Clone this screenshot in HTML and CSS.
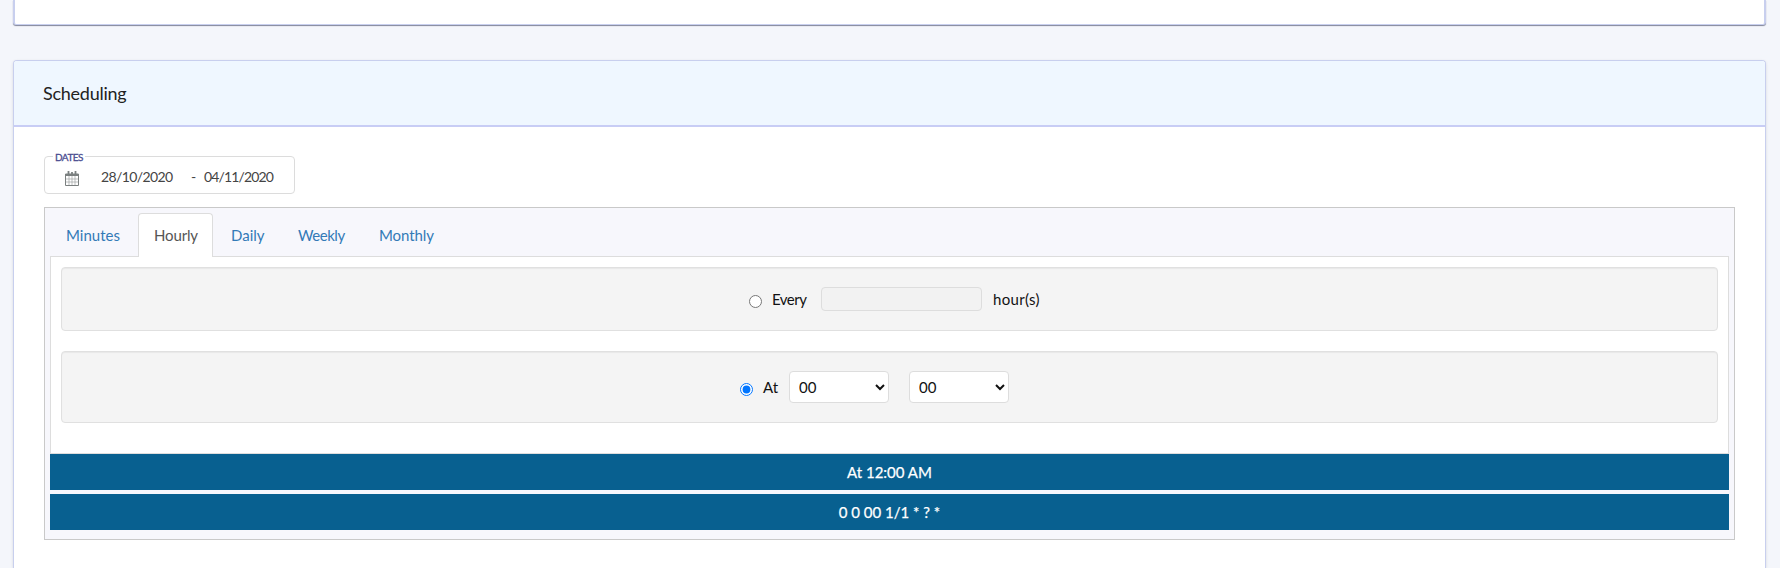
FILE: index.html
```html
<!DOCTYPE html>
<html lang="en">
<head>
<meta charset="utf-8">
<title>Scheduling</title>
<link rel="stylesheet" href="styles.css">
</head>
<body>
<section class="card card-previous"></section>
<section class="card">
  <header class="card-header"><h2 class="card-title">Scheduling</h2></header>
  <div class="card-body">
    <fieldset class="dates">
      <legend class="dates-legend">DATES</legend>
      <div class="dates-row">
        <svg class="calendar" width="14" height="15" viewBox="0 0 14 15" fill="none" stroke="#7b8080">
          <path d="M.5 3h13v11.5H.5z"/>
          <path d="M1 4h12" stroke-width="2"/>
          <path d="M3.5 0v3.5M7 1v2M10.5 0v3.5" stroke-width="1.8"/>
          <path d="M4 5v9M7 5v9M10 5v9M1 8h12M1 11h12" stroke-width=".7" stroke="#a2a5a5"/>
        </svg>
        <span class="date date-from">28/10/2020</span>
        <span class="dash">-</span>
        <span class="date date-to">04/11/2020</span>
      </div>
    </fieldset>
    <div class="cron">
      <nav class="tabs">
        <a class="tab tab-minutes">Minutes</a>
        <a class="tab tab-hourly active">Hourly</a>
        <a class="tab tab-daily">Daily</a>
        <a class="tab tab-weekly">Weekly</a>
        <a class="tab tab-monthly">Monthly</a>
      </nav>
      <div class="panel">
        <div class="well well-every">
          <input class="radio" type="radio" name="mode">
          <span class="label-every">Every</span>
          <input class="hours" type="text" disabled>
          <span class="label-hours">hour(s)</span>
        </div>
        <div class="well well-at">
          <input class="radio" type="radio" name="mode" checked>
          <span class="label-at">At</span>
          <select class="select"><option>00</option></select>
          <select class="select select-minute"><option>00</option></select>
        </div>
      </div>
      <div class="result result-text">At 12:00 AM</div>
      <div class="result result-cron">0 0 00 1/1 * ? *</div>
    </div>
  </div>
</section>
</body>
</html>
```
FILE: styles.css
```css
* { box-sizing: border-box; }
body {
  margin: 0;
  height: 568px;
  overflow: hidden;
  background: #f4f6fb;
  font: 15px/20px Lato, "Open Sans", sans-serif;
  color: #111;
}
.card {
  width: 1753px;
  height: 508px;
  margin-left: 13px;
  background: #fff;
  border: 1px solid #c8cfee;
  border-bottom: 0;
  border-radius: 4px 4px 0 0;
  box-shadow: 0 1px 3px rgba(0, 0, 0, .12);
}
.card-previous {
  height: 25px;
  margin-bottom: 35px;
  border-width: 0 2px 1px;
  border-bottom: 1px solid #c8cfee;
  border-radius: 0 0 3px 3px;
  box-shadow: 0 1px 1px #81869a;
}
.card-header {
  height: 66px;
  padding: 22px 29px 0;
  background: #eff7ff;
  border-bottom: 2px solid #c8cdf5;
  border-radius: 3px 3px 0 0;
}
.card-title {
  margin: 0;
  font-size: 18px;
  line-height: 20px;
  font-weight: 400;
  letter-spacing: -.25px;
  color: #222;
}
.card-body { padding: 23px 30px 0; }
.dates {
  width: 251px;
  height: 44px;
  margin: 0;
  padding: 0;
  border: 1px solid #dcdcdc;
  border-radius: 4px;
}
.dates-legend {
  width: 32px;
  height: 12px;
  margin-left: 8px;
  padding: 1px 2px 0;
  font-size: 10px;
  line-height: 12px;
  letter-spacing: -.55px;
  color: #4b4d91;
  -webkit-text-stroke: .3px #4b4d91;
}
.dates-row {
  display: flex;
  height: 24px;
  padding-left: 20px;
  font-size: 14px;
  color: #444;
}
.calendar { margin-top: 9px; flex: none; }
.date { margin-top: 5px; letter-spacing: -.62px; }
.date-from { width: 90px; margin-left: 22px; }
.date-to { letter-spacing: -.85px; }
.dash { width: 13px; margin-top: 5px; }
.cron {
  width: 1691px;
  height: 333px;
  margin-top: 13px;
  padding: 5px;
  background: #f7f7fc;
  border: 1px solid #c9c9c9;
}
.tabs { display: flex; height: 43px; }
.tab {
  height: 43px;
  padding: 12px 0 0 16px;
  color: #337ab7;
}
.tab-minutes { width: 88px; }
.tab-hourly { width: 75px; padding-left: 15px; letter-spacing: -.15px; }
.tab-daily { width: 67px; padding-left: 18px; }
.tab-weekly { width: 81px; padding-left: 18px; letter-spacing: -.45px; }
.tab-monthly { padding-left: 18px; letter-spacing: -.1px; }
.tab.active {
  height: 44px;
  padding-top: 11px;
  color: #555;
  background: #fff;
  border: 1px solid #ddd;
  border-bottom: 0;
  border-radius: 4px 4px 0 0;
  z-index: 1;
}
.panel {
  height: 198px;
  padding: 10px;
  background: #fff;
  border: 1px solid #ddd;
}
.well {
  display: flex;
  align-items: flex-start;
  background: #f4f4f4;
  border: 1px solid #e0e0e0;
  border-radius: 4px;
  box-shadow: inset 0 1px 1px rgba(0, 0, 0, .05);
}
.well-every { height: 64px; padding: 19px 0 0 687px; }
.well-at { height: 72px; margin-top: 20px; padding: 19px 0 0 678px; }
.radio { flex: none; width: 13px; height: 13px; margin: 8px 0 0; }
.well-at .radio { margin-top: 12px; }
.label-every { width: 59px; margin: 2px 0 0; padding-left: 10px; letter-spacing: -.5px; }
.label-hours { margin: 2px 0 0 11px; letter-spacing: .3px; }
.label-at { width: 36px; margin-top: 6px; padding-left: 10px; }
.hours {
  width: 161px;
  height: 24px;
  background: #f2f2f2;
  border: 1px solid #ddd;
  border-radius: 4px;
}
.select {
  width: 100px;
  height: 32px;
  padding: 0 4px 0 5px;
  font: inherit;
  color: #111;
  background: #fff;
  border: 1px solid #ddd;
  border-radius: 4px;
}
.select-minute { margin-left: 20px; }
.result {
  height: 36px;
  padding-top: 8px;
  line-height: 20px;
  text-align: center;
  color: #fff;
  background: #086090;
  -webkit-text-stroke: .25px #fff;
}
.result-cron { margin-top: 4px; }
```
